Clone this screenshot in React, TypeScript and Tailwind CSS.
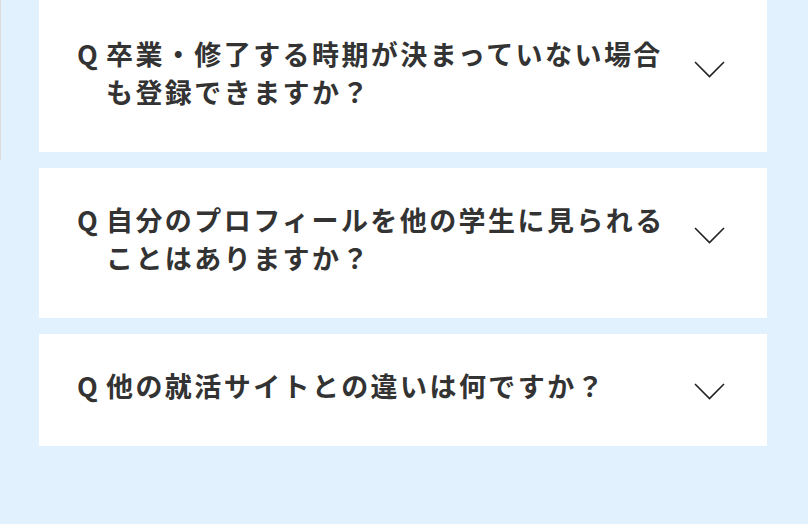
import React from "react"

const faqs = [
  { q: "卒業・修了する時期が決まっていない場合も登録できますか？", lines: 2 },
  { q: "自分のプロフィールを他の学生に見られることはありますか？", lines: 2 },
  { q: "他の就活サイトとの違いは何ですか？", lines: 1 },
]

function Chevron() {
  return (
    <svg width="31" height="17" viewBox="0 0 31 17" fill="none" className="shrink-0">
      <polyline points="1,1 15.5,15.5 30,1" stroke="#222" strokeWidth="1.6" />
    </svg>
  )
}

export default function App() {
  return (
    <div
      className="relative min-h-[524px] w-full bg-[#e1f1fe] pb-[78px]"
      style={{ fontFamily: '"Noto Sans CJK JP", "Noto Sans", sans-serif' }}
    >
      <div className="absolute left-0 top-0 h-[160px] w-[1px] bg-[#dcdcdc]" />

      <div className="ml-[39px] flex w-[728px] flex-col gap-4">
        {faqs.map((item, i) => (
          <div
            key={i}
            className={
              i === 0
                ? "flex items-start bg-white pl-[38px] pr-[42px] pt-[35px] pb-[41px]"
                : "flex items-start bg-white pl-[38px] pr-[42px] pt-[33px] pb-[41px]"
            }
          >
            <div className="flex items-start text-[27px] font-bold leading-[38px] text-[#333]">
              <span className="w-[29px] shrink-0">Q</span>
              <p className="w-[570px] tracking-[0.09em]">{item.q}</p>
            </div>
            <div className={item.lines === 2 ? "ml-auto mt-[26px]" : "ml-auto mt-[16px]"}>
              <Chevron />
            </div>
          </div>
        ))}
      </div>
    </div>
  )
}
